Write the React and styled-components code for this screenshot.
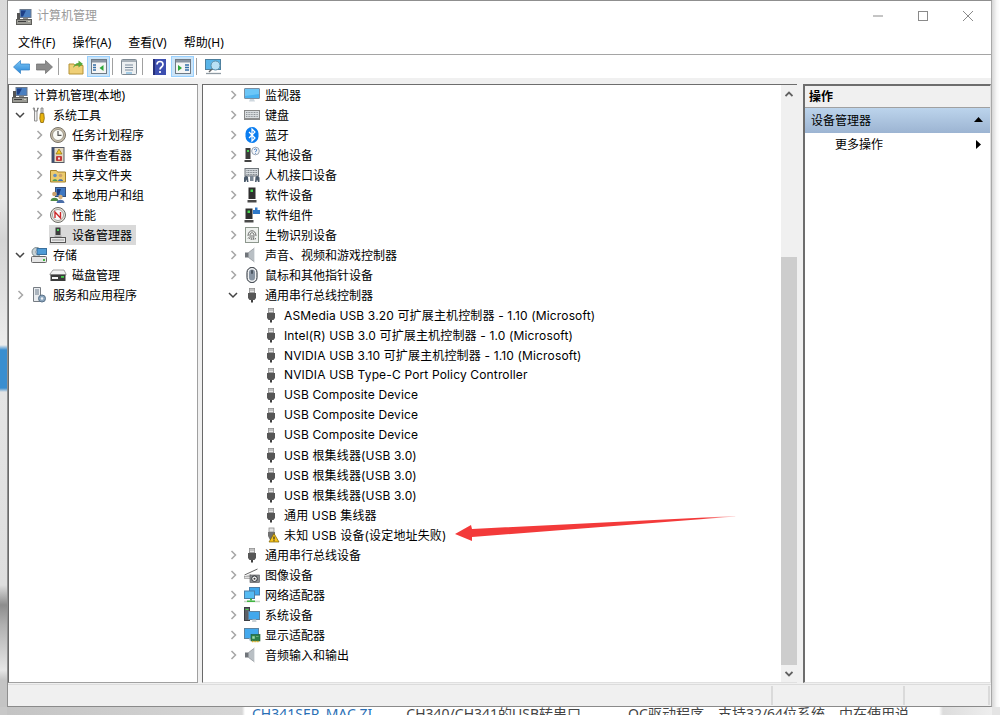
import React from 'react';
import styled, { createGlobalStyle } from 'styled-components';

const GlobalStyle = createGlobalStyle`
  html, body { margin: 0; padding: 0; background: #fff; }
  body { font-family: "Noto Sans", "Noto Sans CJK SC", sans-serif; font-size: 12px; color: #000; }
`;

/* ---------- icons ---------- */
const Glyph = styled.svg`
  display: block;
  flex: none;
  width: ${({ $size }) => $size || 16}px;
  height: ${({ $size }) => $size || 16}px;
  overflow: visible;
`;

const icons = {
  computer: (
    <>
      <rect x="4" y="0.5" width="11" height="8" fill="#4a7fc0" stroke="#6c7a8c" />
      <path d="M5 1.5h5l-3 6H5z" fill="#1d3f86" />
      <path d="M7 9h5v1.5H7z" fill="#888" />
      <rect x="0.5" y="10.5" width="15" height="5" fill="#9a9a94" stroke="#5e5e5a" />
      <path d="M2 12.5h8" stroke="#3e3e3e" />
      <path d="M12 12.5h2" stroke="#d0d0c0" />
      <rect x="1" y="4" width="3" height="6" fill="#555" />
    </>
  ),
  tools: (
    <>
      <path d="M2 1l1.5 3v10h2.500V4L7.500 1 6.500 1v3H3.500V1z" fill="#f1f1f1" stroke="#777" strokeWidth="0.8" />
      <path d="M10 1h2v5h-2z" fill="#ddd" stroke="#777" strokeWidth="0.8" />
      <path d="M9.300 6.500h3.500l.5 5-1 4h-2.500l-1-4z" fill="#e8b40e" stroke="#8a6400" strokeWidth="0.8" />
    </>
  ),
  clock: (
    <>
      <circle cx="8" cy="8" r="7.500" fill="#c8bea8" stroke="#7a746a" />
      <circle cx="8" cy="8" r="5.500" fill="#fbfbf6" stroke="#9a9488" />
      <path d="M8 4v4.300h3.500" fill="none" stroke="#555" strokeWidth="1.200" />
    </>
  ),
  eventLog: (
    <>
      <rect x="2" y="0.500" width="12" height="15" fill="#e4d9c2" stroke="#555a66" />
      <rect x="2" y="0.500" width="2.500" height="15" fill="#3e4f70" />
      <path d="M9 2l3 5H6z" fill="#f2c521" stroke="#7a6200" strokeWidth="0.600" />
      <rect x="6" y="9" width="6" height="5" rx="1" fill="#c43a3a" />
      <rect x="8" y="10.500" width="2" height="2" fill="#f3e1e1" />
    </>
  ),
  shared: (
    <>
      <path d="M0.500 3.500h6l1 1.500h8v10h-15z" fill="#eccb6e" stroke="#a5822c" />
      <circle cx="5" cy="8.500" r="1.800" fill="#5f8ec4" />
      <path d="M2.500 14c0-2.500 5-2.500 5 0z" fill="#4f9e4f" />
      <circle cx="10.500" cy="8.500" r="1.800" fill="#caa06c" />
      <path d="M8 14c0-2.500 5-2.500 5 0z" fill="#3d6fb0" />
    </>
  ),
  users: (
    <>
      <rect x="5.500" y="0.500" width="10" height="9" fill="#3f78c2" stroke="#37517a" />
      <path d="M7 2h4l-2 6H7z" fill="#1e3d7e" />
      <circle cx="4.500" cy="7" r="2.300" fill="#caa06c" />
      <path d="M0.500 14c0-4.500 8-4.500 8 0z" fill="#4e8a43" />
      <circle cx="10.500" cy="10" r="2.200" fill="#d8b27c" />
      <path d="M6.500 16c0-4.500 8-4.500 8 0z" fill="#4a6ea8" />
    </>
  ),
  perf: (
    <>
      <circle cx="8" cy="8" r="7.500" fill="#e6e3da" stroke="#6b6b66" />
      <circle cx="8" cy="8" r="5.500" fill="#fbfbfb" stroke="#a5a5a0" />
      <path d="M5 11V5l5.500 6V5" fill="none" stroke="#cc2a2a" strokeWidth="1.400" />
    </>
  ),
  device: (
    <>
      <rect x="5.500" y="0.500" width="5" height="7.500" fill="#3d3d3d" />
      <rect x="7" y="2" width="2" height="2" fill="#4bd35c" />
      <path d="M4.500 8.500h7v2h-7z" fill="#aaa" />
      <rect x="0.500" y="10.500" width="15" height="5" fill="#e8e8e8" stroke="#555" />
      <path d="M2 13h12" stroke="#999" />
    </>
  ),
  storage: (
    <>
      <circle cx="5.500" cy="5" r="4.500" fill="#c9d3d6" stroke="#7d8a8d" />
      <circle cx="5.500" cy="5" r="1.200" fill="#fff" stroke="#777" strokeWidth="0.500" />
      <rect x="6" y="1.500" width="9.500" height="6" fill="#4f9bd6" stroke="#3a6f9c" />
      <rect x="0.500" y="9.500" width="15" height="6" rx="1" fill="#e5e5e5" stroke="#686868" />
      <rect x="12" y="12" width="2" height="2" fill="#3db83d" />
    </>
  ),
  disk: (
    <>
      <path d="M3 3h11l2 4v1H0V7z" fill="#f2f2f2" stroke="#666" strokeWidth="0.600" />
      <rect x="0.500" y="7.500" width="15" height="6.500" fill="#3a3a3a" />
      <rect x="11" y="9" width="3" height="1.800" fill="#46d04f" />
      <rect x="2" y="10" width="6" height="2" fill="#f5f5f5" />
    </>
  ),
  services: (
    <>
      <path d="M2.500 0.500h7v14h-7z" fill="#e9ecef" stroke="#767c83" />
      <path d="M4 3h4M4 5h4M4 7h4" stroke="#6a7a8a" />
      <circle cx="11" cy="11.500" r="3.500" fill="#8ba5bd" stroke="#5a7289" />
      <circle cx="11" cy="11.500" r="1.200" fill="#eef2f6" />
    </>
  ),
  monitor: (
    <>
      <rect x="0.500" y="1.500" width="15" height="10" rx="0.500" fill="#49b2f0" stroke="#7a8fa3" />
      <path d="M1 2h14v5L1 9z" fill="#6cc6f7" />
      <path d="M6 12h4l1 2.500H5z" fill="#cfd8df" />
    </>
  ),
  keyboard: (
    <>
      <rect x="0.500" y="3.500" width="15" height="9" fill="#d9dde0" stroke="#888" />
      <path d="M2 5.500h12M2 7.500h12M2 9.500h12" stroke="#8f9499" strokeDasharray="1 0.600" />
      <rect x="0.500" y="11" width="15" height="1.500" fill="#8d8d8d" />
    </>
  ),
  bluetooth: (
    <>
      <rect x="1.500" y="0" width="13" height="16" rx="6.500" fill="#0a7df0" />
      <path d="M5 5l6 6-3 3V2l3 3-6 6" fill="none" stroke="#fff" strokeWidth="1.200" />
    </>
  ),
  other: (
    <>
      <rect x="1.500" y="1" width="5" height="11" fill="#3b3b3b" />
      <rect x="3" y="3" width="2" height="2" fill="#46d04f" />
      <rect x="0.500" y="13" width="7" height="2" fill="#444" />
      <circle cx="11.500" cy="4" r="3.800" fill="#f5f7fa" stroke="#9aa6b5" />
      <path d="M10.300 3c.2-1.600 2.700-1.300 2.400.2-.2.800-1.200.9-1.200 2M11.500 6v.700" fill="none" stroke="#2e6cb8" strokeWidth="0.900" />
    </>
  ),
  hid: (
    <>
      <rect x="1" y="1.500" width="13.500" height="7.500" fill="#d5dade" stroke="#6f757a" />
      <path d="M2.500 3.500h10.500M2.500 5.500h10.500M2.500 7.500h10.500" stroke="#7c8389" strokeDasharray="1 0.600" />
      <path d="M0 15v-4c0-2 3-3 4 -1l.5 5h-1.500l-.5-2.500-1 2.500zM15.500 15v-4c0-2-3-3-4-1l-.5 5h1.500l.5-2.500 1 2.500z" fill="#4b5a6b" />
      <path d="M6 9h3.500v5H6z" fill="#7b8794" />
    </>
  ),
  software: (
    <>
      <rect x="4.500" y="0.500" width="7" height="11.500" fill="#2f2f2f" />
      <rect x="6.500" y="2.500" width="2.500" height="2.500" fill="#46d84f" />
      <rect x="3.500" y="13" width="9" height="2.500" fill="#4a4a4a" />
    </>
  ),
  softComp: (
    <>
      <rect x="1.500" y="1.500" width="7" height="10.500" fill="#2f2f2f" />
      <rect x="3.500" y="3.500" width="2.500" height="2.500" fill="#46d84f" />
      <rect x="0.500" y="13" width="9" height="2.500" fill="#4a4a4a" />
      <path d="M9 3h2V0.500h2.500V3H16v4H9z" fill="#2f79c9" />
    </>
  ),
  bio: (
    <>
      <rect x="1.500" y="0.500" width="13" height="15" fill="#eef1ee" stroke="#8d978d" />
      <path d="M4 9c0-7 8-7 8 0M5.500 12c1-2 .5-3 .5-4 0-3 4-3 4 0 0 2-.5 3-1 5M8 8c0 2 0 3-1 5M11.500 11l-.5 1.500M4.500 10.500l-.5 1" fill="none" stroke="#5c5c5c" strokeWidth="0.900" />
    </>
  ),
  sound: (
    <>
      <path d="M1 5.500h3.500v5H1z" fill="#70757a" />
      <path d="M4.500 5.500L10.500 1v14L4.500 10.500z" fill="#b9bfc4" stroke="#7d8388" strokeWidth="0.600" />
      <path d="M10.500 1v14" stroke="#e4e7e9" />
    </>
  ),
  mouse: (
    <>
      <rect x="3" y="0.500" width="10" height="15" rx="4.800" fill="#f0f1f2" stroke="#232a33" />
      <rect x="5" y="2.500" width="6" height="11" rx="3" fill="#8894a2" />
      <rect x="7.300" y="3" width="1.400" height="4" rx="0.700" fill="#333c46" />
    </>
  ),
  usb: (
    <>
      <rect x="5.400" y="1.400" width="5.200" height="4.200" fill="#e6e6e6" stroke="#8e8e8e" strokeWidth="0.800" />
      <path d="M6.500 3h1M8.500 3h1" stroke="#555" />
      <path d="M4 6h8v5l-1.500 2h-5L4 11z" fill="#565656" />
      <rect x="7" y="13" width="2" height="2.500" fill="#3f3f3f" />
    </>
  ),
  usbWarn: (
    <>
      <rect x="6" y="1" width="5" height="4" fill="#e3e3e3" stroke="#8e8e8e" strokeWidth="0.800" />
      <path d="M5 5h7v4l-2 4H7l-2-4z" fill="#707070" />
      <path d="M11 6.500l5 8.500H6z" fill="#f7c51e" stroke="#7a5f00" strokeWidth="0.700" />
      <path d="M11 9.500v3M11 13.200v1" stroke="#222" strokeWidth="1.100" />
    </>
  ),
  camera: (
    <>
      <path d="M0.500 8l13-6" stroke="#555" strokeWidth="0.900" />
      <path d="M1 9l6-2v2z" fill="#c7c7c7" />
      <rect x="0.500" y="9.500" width="7" height="2" fill="#e0e0e0" stroke="#8d8d8d" strokeWidth="0.600" />
      <rect x="6" y="8" width="9.500" height="7.500" fill="#8a8d90" stroke="#4f5154" strokeWidth="0.600" />
      <circle cx="10.500" cy="11.700" r="2.800" fill="#f4f5f6" stroke="#2c2f33" />
      <circle cx="10.500" cy="11.700" r="1" fill="#333" />
    </>
  ),
  network: (
    <>
      <rect x="5.500" y="0.500" width="10" height="7.500" fill="#3fa7ec" stroke="#4a7ea8" />
      <rect x="0.500" y="4" width="10" height="7.500" fill="#55bbf3" stroke="#4a7ea8" />
      <path d="M0 14.500h16" stroke="#c6d3c6" strokeWidth="1.500" />
      <path d="M3 13.500h8v1.500H3z" fill="#3fb53f" />
      <path d="M6 11.500h2v2H6z" fill="#3fb53f" />
    </>
  ),
  system: (
    <>
      <rect x="0.500" y="0.500" width="5" height="13" fill="#5c6066" stroke="#3c3f44" />
      <rect x="1.500" y="2" width="3" height="1" fill="#4cd04c" />
      <rect x="4.500" y="4.500" width="11" height="8" fill="#42a8ed" stroke="#5d83a0" />
      <path d="M8.500 12.500h3.500l.5 2.500H8z" fill="#c9d1d6" />
    </>
  ),
  display: (
    <>
      <rect x="0.500" y="1.500" width="14" height="10" fill="#43a9ee" stroke="#5d83a0" />
      <path d="M5 11.500h4v2H5z" fill="#bfc9d0" />
      <rect x="7" y="7.500" width="9" height="6.500" fill="#2d7f4a" stroke="#1e5a33" strokeWidth="0.600" />
      <path d="M8.500 9.500h2v2h-2zM12 9.500h2.500" fill="#9fd8a8" stroke="#9fd8a8" strokeWidth="0.500" />
      <path d="M8 14.500h7" stroke="#e0b020" strokeWidth="1.400" strokeDasharray="1 0.600" />
    </>
  ),
};

const Icon = ({ name, size }) => (
  <Glyph viewBox="0 0 16 16" $size={size}>
    {icons[name]}
  </Glyph>
);

/* ---------- page around the window ---------- */
const Page = styled.div`
  display: grid;
  grid-template-columns: 7px 985px 8px;
  grid-template-rows: 707px 8px;
  width: 1000px;
  height: 715px;
  overflow: hidden;
`;

const LeftEdge = styled.div`
  background: linear-gradient(
    #dadada 0,
    #e6e6e6 200px,
    #d4d4d4 240px,
    #ececec 345px,
    #3a8ed0 350px,
    #3a8ed0 388px,
    #e4e4e4 392px,
    #dedede 585px,
    #8d8d8d 605px,
    #b0b0b0 625px,
    #e6e6e6 670px,
    #c4c4c4 680px
  );
`;

const RightEdge = styled.div`
  background: linear-gradient(90deg, #d6d6d6, #f7f7f7 60%, #fff);
`;

const BottomLeft = styled.div`
  background: #c8c8c8;
`;

const BottomRight = styled.div`
  background: #e4e4e4;
`;

const BottomPage = styled.div`
  display: flex;
  overflow: hidden;
  height: 8px;
  background: linear-gradient(90deg, #c4c4c4 0, #d6d6d6 235px, #fff 238px, #fff 932px, #dcdcdc 936px, #eee);
  font-size: 14px;
  color: #444;
  white-space: nowrap;
  padding-left: 245px;
  box-sizing: border-box;
`;

const PageLink = styled.span`
  color: #2a6fb5;
  margin-right: 34px;
  line-height: 14px;
`;

const PageText = styled.span`
  line-height: 14px;
  margin-right: ${({ $gap }) => $gap || 0}px;
`;

/* ---------- window ---------- */
const Window = styled.div`
  display: flex;
  flex-direction: column;
  background: #fff;
  border: 1px solid #8f8f8f;
  border-right-color: #a8a8a8;
  border-bottom-color: #8a8a8a;
  box-sizing: border-box;
`;

const TitleBar = styled.div`
  display: flex;
  align-items: center;
  height: 31px;
  padding-left: 8px;
  flex: none;
`;

const Title = styled.span`
  margin-left: 5px;
  padding-bottom: 3px;
  color: #9a9a9a;
  font-size: 12px;
`;

const Controls = styled.div`
  display: flex;
  align-items: center;
  margin-left: auto;
  margin-right: 18px;
  padding-bottom: 2px;
  gap: 35px;
`;

const MenuBar = styled.div`
  display: flex;
  align-items: center;
  gap: 17px;
  height: 23px;
  padding-left: 10px;
  border-bottom: 1px solid #a5a5a5;
  box-sizing: border-box;
  flex: none;
`;

const MenuItem = styled.span`
  padding-bottom: 2px;
  font-size: 12px;
`;

const ToolBar = styled.div`
  display: flex;
  align-items: center;
  height: 23px;
  padding-left: 2px;
  flex: none;
`;

const ToolButton = styled.div`
  display: flex;
  align-items: center;
  justify-content: center;
  box-sizing: border-box;
  width: 23px;
  height: 21px;
  background: ${({ $active }) => ($active ? '#cce4f7' : 'transparent')};
  border: 1px solid ${({ $active }) => ($active ? '#99d1ff' : 'transparent')};
`;

const ToolSep = styled.div`
  width: 1px;
  height: 17px;
  background: #a0a0a0;
  margin: 0 ${({ $space }) => $space || 5}px 0 2px;
`;

const Workspace = styled.div`
  flex: 1;
  min-height: 0;
  display: flex;
  background: #f0f0f0;
  padding-top: 6px;
  padding-bottom: 1px;
`;

const LeftPane = styled.div`
  width: 190px;
  box-sizing: border-box;
  background: #fff;
  border: 1px solid #a0a0a0;
  border-top-color: #6d6d6d;
  border-left-color: #696969;
`;

const CenterPane = styled.div`
  position: relative;
  display: flex;
  width: 595px;
  margin-left: 4px;
  box-sizing: border-box;
  background: #fff;
  border: 1px solid #a0a0a0;
  border-top-color: #6d6d6d;
  border-left-color: #696969;
  border-right: none;
  border-bottom-color: #e0e0e0;
`;

const TreeWrap = styled.div`
  flex: 1;
  font-family: "Inter", "Noto Sans CJK SC", sans-serif;
`;

const Row = styled.div`
  display: flex;
  align-items: center;
  height: 20px;
  padding-left: ${({ $indent }) => $indent}px;
`;

const Toggle = styled.div`
  display: flex;
  align-items: center;
  justify-content: center;
  flex: none;
  width: 12px;
  height: 12px;
  margin-right: 4px;
  color: ${({ $open }) => ($open ? '#444' : '#a6a6a6')};
`;

const Item = styled.div`
  display: flex;
  align-items: center;
  height: 20px;
  padding-left: 1px;
  padding-right: 4px;
  background: ${({ $selected }) => ($selected ? '#d9d9d9' : 'transparent')};
`;

const Label = styled.span`
  margin-left: ${({ $gap }) => $gap || 6}px;
  padding-bottom: 2px;
  font-size: 12px;
  white-space: nowrap;
`;

const NavLabel = styled(Label)`
  padding-bottom: 0;
`;

const ChildLabel = styled(Label)`
  padding-bottom: 1px;
  letter-spacing: 0.15px;
`;

const Scrollbar = styled.div`
  display: flex;
  flex-direction: column;
  flex: none;
  width: 16px;
  background: #f0f0f0;
`;

const ScrollButton = styled.div`
  display: flex;
  align-items: center;
  justify-content: center;
  height: 17px;
  flex: none;
  color: #606060;
`;

const ScrollTrack = styled.div`
  flex: 1;
  display: flex;
  flex-direction: column;
  padding-top: 155px;
`;

const ScrollThumb = styled.div`
  flex: 1;
  background: #cdcdcd;
`;

const ArrowMark = styled.svg`
  position: absolute;
  left: 251px;
  top: 431px;
  width: 282px;
  height: 28px;
`;

const RightPane = styled.div`
  width: 188px;
  margin-left: 6px;
  box-sizing: border-box;
  background: #fff;
  border: 1px solid #e0e0e0;
  border-top: 2px solid #6d6d6d;
  border-left: 2px solid #6d6d6d;
`;

const ActionsHeader = styled.div`
  display: flex;
  align-items: center;
  height: 22px;
  padding: 0 0 1px 4px;
  box-sizing: border-box;
  background: #f0f0f0;
  border-bottom: 1px solid #a0a0a0;
  font-size: 12px;
  font-weight: 700;
`;

const ActionsSection = styled.div`
  display: flex;
  align-items: center;
  justify-content: space-between;
  height: 25px;
  padding: 0 7px 2px 6px;
  box-sizing: border-box;
  background: linear-gradient(#bcd4ec, #9cb4d2);
  font-size: 12px;
`;

const ActionRow = styled.div`
  display: flex;
  align-items: center;
  justify-content: space-between;
  height: 22px;
  padding: 0 9px 0 30px;
  font-size: 12px;
`;

const StatusBar = styled.div`
  display: flex;
  height: 22px;
  flex: none;
  background: #f0f0f0;
  border-top: 1px solid #dcdcdc;
  box-sizing: border-box;
`;

const StatusCell = styled.div`
  width: ${({ $width }) => $width}px;
  border-right: 2px solid #dadada;
  box-sizing: border-box;
  margin: 1px 0;
`;

/* ---------- small drawings ---------- */
const Chevron = ({ open }) => (
  <svg width="12" height="12" viewBox="0 0 12 12">
    <path
      d={open ? 'M2 4l4 4 4-4' : 'M4.500 2l4 4-4 4'}
      fill="none"
      stroke="currentColor"
      strokeWidth="1.500"
    />
  </svg>
);

const BackArrow = () => (
  <svg width="17" height="14" viewBox="0 0 17 14">
    <defs>
      <linearGradient id="backFill" x1="0" y1="0" x2="0" y2="1">
        <stop offset="0" stopColor="#7cc7f5" />
        <stop offset="1" stopColor="#2a86d8" />
      </linearGradient>
    </defs>
    <path d="M.5 7L7.500 .5v3.500h9v6h-9v3.500z" fill="url(#backFill)" stroke="#2f7fc4" strokeWidth="0.700" />
  </svg>
);

const ForwardArrow = () => (
  <svg width="17" height="14" viewBox="0 0 17 14">
    <path d="M16.500 7L9.500 .5v3.500h-9v6h9v3.500z" fill="#8b8b8b" stroke="#6c6c6c" strokeWidth="0.700" />
  </svg>
);

const UpFolder = () => (
  <svg width="16" height="16" viewBox="0 0 16 16">
    <path d="M1 5h5l1 1.500h8V15H1z" fill="#efcf76" stroke="#b59337" />
    <path d="M5 9c.5-3 3-5 5.500-5V1.500L15 5l-4.500 3.500V6C8.500 6 6.500 7 5 9z" fill="#57a83d" />
  </svg>
);

const PaneToggle = ({ right }) => (
  <svg width="16" height="15" viewBox="0 0 16 15">
    <rect x="0.500" y="0.500" width="15" height="14" fill="#f5f5f5" stroke="#6f7a85" />
    <rect x="1" y="1" width="14" height="2.500" fill="#8a96a3" />
    {right ? (
      <>
        <path d="M3 6l4 3-4 3z" fill="#2ea83a" />
        <path d="M10 6h4M10 8.500h4M10 11h4" stroke="#3470a8" strokeWidth="1.300" />
      </>
    ) : (
      <>
        <path d="M2 6h3M2 8.500h3M2 11h3" stroke="#3470a8" strokeWidth="1.300" />
        <path d="M12.500 6l-4 3 4 3z" fill="#2ea83a" />
      </>
    )}
  </svg>
);

const DocIcon = () => (
  <svg width="16" height="16" viewBox="0 0 16 16">
    <rect x="0.500" y="0.500" width="15" height="15" rx="1" fill="#eceff1" stroke="#7f8a94" />
    <rect x="1" y="1" width="14" height="2" fill="#a7b0b8" />
    <path d="M4 6h8M4 8.500h8M4 11h8" stroke="#7a8b9c" />
    <rect x="5" y="13.500" width="6" height="1" fill="#5aa5d6" />
  </svg>
);

const HelpIcon = () => (
  <svg width="13" height="16" viewBox="0 0 13 16">
    <rect width="13" height="16" fill="#3d4fb0" />
    <rect width="2" height="16" fill="#262f78" />
    <path d="M4 5.500c0-4 6-4 6 0 0 2.500-3 2.500-3 5M7 12v2" fill="none" stroke="#fff" strokeWidth="1.700" />
  </svg>
);

const MonitorSearch = () => (
  <svg width="17" height="16" viewBox="0 0 17 16">
    <rect x="0.500" y="0.500" width="15" height="10" fill="#58b4e8" stroke="#4d7f9e" />
    <circle cx="10.500" cy="6.500" r="4.500" fill="#b8e0f5" stroke="#5e8ea8" />
    <path d="M7 10l-3 3" stroke="#666" strokeWidth="1.400" />
    <path d="M1 14.500h15" stroke="#8f9aa3" strokeWidth="1.300" />
  </svg>
);

const Minimize = () => (
  <svg width="10" height="10" viewBox="0 0 10 10">
    <path d="M0 5h10" stroke="#8a8a8a" />
  </svg>
);

const Maximize = () => (
  <svg width="10" height="10" viewBox="0 0 10 10">
    <rect x="0.500" y="0.500" width="9" height="9" fill="none" stroke="#8a8a8a" />
  </svg>
);

const CloseMark = () => (
  <svg width="10" height="10" viewBox="0 0 10 10">
    <path d="M0 0l10 10M10 0L0 10" stroke="#8a8a8a" />
  </svg>
);

const ScrollChevron = ({ up }) => (
  <svg width="8" height="6" viewBox="0 0 8 6">
    <path d={up ? 'M.5 5L4 1.500 7.500 5' : 'M.5 1L4 4.500 7.500 1'} fill="none" stroke="currentColor" strokeWidth="1.800" />
  </svg>
);

/* ---------- data ---------- */
const leftTree = [
  { label: '计算机管理(本地)', icon: 'computer', indent: 2, root: true },
  { label: '系统工具', icon: 'tools', indent: 5, open: true },
  { label: '任务计划程序', icon: 'clock', indent: 24, closed: true },
  { label: '事件查看器', icon: 'eventLog', indent: 24, closed: true },
  { label: '共享文件夹', icon: 'shared', indent: 24, closed: true },
  { label: '本地用户和组', icon: 'users', indent: 24, closed: true },
  { label: '性能', icon: 'perf', indent: 24, closed: true },
  { label: '设备管理器', icon: 'device', indent: 24, selected: true },
  { label: '存储', icon: 'storage', indent: 5, open: true },
  { label: '磁盘管理', icon: 'disk', indent: 24 },
  { label: '服务和应用程序', icon: 'services', indent: 5, closed: true },
];

const before = [
  ['监视器', 'monitor'],
  ['键盘', 'keyboard'],
  ['蓝牙', 'bluetooth'],
  ['其他设备', 'other'],
  ['人机接口设备', 'hid'],
  ['软件设备', 'software'],
  ['软件组件', 'softComp'],
  ['生物识别设备', 'bio'],
  ['声音、视频和游戏控制器', 'sound'],
  ['鼠标和其他指针设备', 'mouse'],
];

const usbChildren = [
  ['ASMedia USB 3.20 可扩展主机控制器 - 1.10 (Microsoft)', 'usb'],
  ['Intel(R) USB 3.0 可扩展主机控制器 - 1.0 (Microsoft)', 'usb'],
  ['NVIDIA USB 3.10 可扩展主机控制器 - 1.10 (Microsoft)', 'usb'],
  ['NVIDIA USB Type-C Port Policy Controller', 'usb'],
  ['USB Composite Device', 'usb'],
  ['USB Composite Device', 'usb'],
  ['USB Composite Device', 'usb'],
  ['USB 根集线器(USB 3.0)', 'usb'],
  ['USB 根集线器(USB 3.0)', 'usb'],
  ['USB 根集线器(USB 3.0)', 'usb'],
  ['通用 USB 集线器', 'usb'],
  ['未知 USB 设备(设定地址失败)', 'usbWarn'],
];

const after = [
  ['通用串行总线设备', 'usb'],
  ['图像设备', 'camera'],
  ['网络适配器', 'network'],
  ['系统设备', 'system'],
  ['显示适配器', 'display'],
  ['音频输入和输出', 'sound'],
];

const DeviceRow = ({ label, icon, open }) => (
  <Row $indent={24}>
    <Toggle $open={open}>
      <Chevron open={open} />
    </Toggle>
    <Item>
      <Icon name={icon} />
      <Label $gap={5}>{label}</Label>
    </Item>
  </Row>
);

const App = () => (
  <>
    <GlobalStyle />
    <Page>
      <LeftEdge />
      <Window>
        <TitleBar>
          <Icon name="computer" />
          <Title>计算机管理</Title>
          <Controls>
            <Minimize />
            <Maximize />
            <CloseMark />
          </Controls>
        </TitleBar>
        <MenuBar>
          <MenuItem>文件(F)</MenuItem>
          <MenuItem>操作(A)</MenuItem>
          <MenuItem>查看(V)</MenuItem>
          <MenuItem>帮助(H)</MenuItem>
        </MenuBar>
        <ToolBar>
          <ToolButton><BackArrow /></ToolButton>
          <ToolButton><ForwardArrow /></ToolButton>
          <ToolSep />
          <ToolButton><UpFolder /></ToolButton>
          <ToolButton $active><PaneToggle /></ToolButton>
          <ToolSep $space={4} />
          <ToolButton><DocIcon /></ToolButton>
          <ToolSep />
          <ToolButton><HelpIcon /></ToolButton>
          <ToolButton $active><PaneToggle right /></ToolButton>
          <ToolSep />
          <ToolButton><MonitorSearch /></ToolButton>
        </ToolBar>
        <Workspace>
          <LeftPane>
            {leftTree.map((node) => (
              <Row key={node.label} $indent={node.indent}>
                {!node.root && (
                  <Toggle $open={node.open}>
                    {(node.open || node.closed) && <Chevron open={node.open} />}
                  </Toggle>
                )}
                <Item $selected={node.selected}>
                  <Icon name={node.icon} />
                  <NavLabel>{node.label}</NavLabel>
                </Item>
              </Row>
            ))}
          </LeftPane>
          <CenterPane>
            <TreeWrap>
              {before.map(([label, icon]) => (
                <DeviceRow key={label} label={label} icon={icon} />
              ))}
              <DeviceRow label="通用串行总线控制器" icon="usb" open />
              {usbChildren.map(([label, icon], i) => (
                <Row key={i} $indent={43}>
                  <Toggle />
                  <Item>
                    <Icon name={icon} />
                    <ChildLabel $gap={5}>{label}</ChildLabel>
                  </Item>
                </Row>
              ))}
              {after.map(([label, icon]) => (
                <DeviceRow key={label} label={label} icon={icon} />
              ))}
            </TreeWrap>
            <Scrollbar>
              <ScrollButton><ScrollChevron up /></ScrollButton>
              <ScrollTrack><ScrollThumb /></ScrollTrack>
              <ScrollButton><ScrollChevron /></ScrollButton>
            </Scrollbar>
            <ArrowMark viewBox="0 0 282 28">
              <defs>
                <linearGradient id="arrowFade" x1="0" y1="0" x2="1" y2="0">
                  <stop offset="0" stopColor="#f33a3a" />
                  <stop offset="0.88" stopColor="#f33a3a" />
                  <stop offset="1" stopColor="#f33a3a" stopOpacity="0.2" />
                </linearGradient>
              </defs>
              <path d="M1 18L17 9l1 4L281 0l.5.6L18 21l0 4z" fill="url(#arrowFade)" />
            </ArrowMark>
          </CenterPane>
          <RightPane>
            <ActionsHeader>操作</ActionsHeader>
            <ActionsSection>
              <span>设备管理器</span>
              <svg width="9" height="5" viewBox="0 0 9 5"><path d="M4.500 0L9 5H0z" fill="#000" /></svg>
            </ActionsSection>
            <ActionRow>
              <span>更多操作</span>
              <svg width="5" height="9" viewBox="0 0 5 9"><path d="M0 0l5 4.500L0 9z" fill="#000" /></svg>
            </ActionRow>
          </RightPane>
        </Workspace>
        <StatusBar>
          <StatusCell $width={765} />
          <StatusCell $width={132} />
          <StatusCell $width={85} />
        </StatusBar>
      </Window>
      <RightEdge />
      <BottomLeft />
      <BottomPage>
        <PageLink>CH341SER_MAC.ZI</PageLink>
        <PageText $gap={47}>CH340/CH341的USB转串口</PageText>
        <PageText>OC驱动程序，支持32/64位系统，中在使用说</PageText>
      </BottomPage>
      <BottomRight />
    </Page>
  </>
);

export default App;
